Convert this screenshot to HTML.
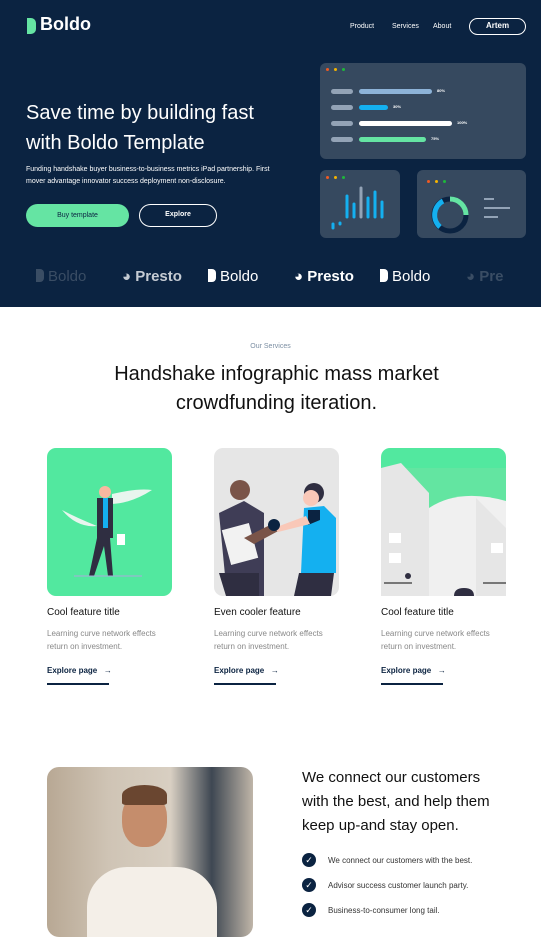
<!DOCTYPE html>
<html><head><style>
*{margin:0;padding:0;box-sizing:border-box}
body{width:541px;height:924px;overflow:hidden;background:#fff;font-family:"Liberation Sans",sans-serif;position:relative}
.a{position:absolute}
.hero{position:absolute;left:0;top:0;width:541px;height:307px;background:#0b2341}
.nav{color:#fff;font-size:7px;top:23px}
.card{background:#36495f;border-radius:6px}
.dots i{display:inline-block;width:3px;height:3px;border-radius:50%;margin-right:5px}
.bar{height:5px;border-radius:3px}
.lbl{font-size:4px;color:#fff;font-weight:bold}
.logo{font-size:15px;color:#fff;top:268px}
.ft{font-size:10px;color:#111;top:607px}
.fd{font-size:8px;color:#888;line-height:13px;top:627px;width:130px}
.fe{font-size:8px;color:#0b2341;font-weight:bold;top:666px}
.ful{height:2px;background:#0b2341;width:62px;top:683px}
.chk{width:14px;height:14px;border-radius:50%;background:#0b2341;color:#fff;font-size:9px;text-align:center;line-height:14px}
.ct{font-size:8px;color:#333}
.bl{display:inline-block;width:8px;height:13px;border-radius:0 4px 4px 0;margin-right:4px;vertical-align:-1px}
</style></head><body>
<div class="hero"></div>
<div class="a" style="left:27px;top:18px;width:9px;height:16px;background:#65e4a3;border-radius:0 5px 5px 0"></div>
<div class="a" style="left:40px;top:14px;font-size:18px;font-weight:bold;color:#fff">Boldo</div>
<div class="a nav" style="left:350px">Product</div>
<div class="a nav" style="left:392px">Services</div>
<div class="a nav" style="left:433px">About</div>
<div class="a" style="left:469px;top:18px;width:57px;height:17px;border:1.5px solid #fff;border-radius:9px;color:#fff;font-size:8px;font-weight:bold;text-align:center;line-height:14px">Artem</div>

<div class="a card" style="left:320px;top:63px;width:206px;height:96px"></div>
<div class="a dots" style="left:326px;top:68px;font-size:0"><i style="background:#f05a22"></i><i style="background:#f5b400"></i><i style="background:#1db83b"></i></div>
<div class="a bar" style="left:331px;top:89px;width:22px;background:#93a3b6"></div>
<div class="a bar" style="left:359px;top:89px;width:73px;background:#8db3d8"></div><div class="a lbl" style="left:437px;top:88px">80%</div>
<div class="a bar" style="left:331px;top:105px;width:22px;background:#93a3b6"></div>
<div class="a bar" style="left:359px;top:105px;width:29px;background:#14b0f0"></div><div class="a lbl" style="left:393px;top:104px">30%</div>
<div class="a bar" style="left:331px;top:121px;width:22px;background:#93a3b6"></div>
<div class="a bar" style="left:359px;top:121px;width:93px;background:#fff"></div><div class="a lbl" style="left:457px;top:120px">100%</div>
<div class="a bar" style="left:331px;top:137px;width:22px;background:#93a3b6"></div>
<div class="a bar" style="left:359px;top:137px;width:67px;background:#65e4a3"></div><div class="a lbl" style="left:431px;top:136px">75%</div>

<div class="a card" style="left:320px;top:170px;width:80px;height:68px"></div>
<div class="a dots" style="left:326px;top:176px;font-size:0"><i style="background:#f05a22"></i><i style="background:#f5b400"></i><i style="background:#1db83b"></i></div>
<svg class="a" style="left:320px;top:170px" width="80" height="68"><g stroke-linecap="round" stroke-width="3"><line x1="13" y1="54" x2="13" y2="58" stroke="#14b0f0"/><line x1="20" y1="53" x2="20" y2="54" stroke="#14b0f0"/><line x1="27" y1="26" x2="27" y2="47" stroke="#14b0f0"/><line x1="34" y1="34" x2="34" y2="47" stroke="#14b0f0"/><line x1="41" y1="18" x2="41" y2="47" stroke="#93a3b6"/><line x1="48" y1="28" x2="48" y2="47" stroke="#14b0f0"/><line x1="55" y1="22" x2="55" y2="47" stroke="#14b0f0"/><line x1="62" y1="32" x2="62" y2="47" stroke="#14b0f0"/></g></svg>
<div class="a card" style="left:417px;top:170px;width:109px;height:68px"></div>
<div class="a dots" style="left:427px;top:180px;font-size:0"><i style="background:#f05a22"></i><i style="background:#f5b400"></i><i style="background:#1db83b"></i></div>
<svg class="a" style="left:430px;top:195px" width="40" height="40"><circle cx="20" cy="20" r="16" fill="none" stroke="#0b2341" stroke-width="5"/><path d="M20 4 A16 16 0 0 1 36 20" fill="none" stroke="#65e4a3" stroke-width="5"/><path d="M10 32 A16 16 0 0 1 13 6" fill="none" stroke="#14b0f0" stroke-width="5"/></svg>
<div class="a" style="left:484px;top:198px;width:10px;height:2px;background:#93a3b6"></div>
<div class="a" style="left:484px;top:207px;width:26px;height:2px;background:#93a3b6"></div>
<div class="a" style="left:484px;top:216px;width:14px;height:2px;background:#93a3b6"></div>

<div class="a" style="left:26px;top:98px;font-size:20px;color:#fff;line-height:30px">Save time by building fast<br>with Boldo Template</div>
<div class="a" style="left:26px;top:164px;font-size:7px;color:#fff;line-height:12px">Funding handshake buyer business-to-business metrics iPad partnership. First<br>mover advantage innovator success deployment non-disclosure.</div>
<div class="a" style="left:26px;top:204px;width:103px;height:23px;background:#65e4a3;border-radius:12px;font-size:7px;color:#0b2341;text-align:center;line-height:23px">Buy template</div>
<div class="a" style="left:139px;top:204px;width:78px;height:23px;border:1.5px solid #fff;border-radius:12px;font-size:7px;color:#fff;font-weight:bold;text-align:center;line-height:20px">Explore</div>

<div class="a logo" style="left:36px;color:#3a4d64"><span class="bl" style="background:#3a4d64"></span>Boldo</div>
<div class="a logo" style="left:122px;color:#c5cbd3;font-weight:bold">◕ Presto</div>
<div class="a logo" style="left:208px"><span class="bl" style="background:#fff"></span>Boldo</div>
<div class="a logo" style="left:294px;font-weight:bold">◕ Presto</div>
<div class="a logo" style="left:380px"><span class="bl" style="background:#fff"></span>Boldo</div>
<div class="a logo" style="left:466px;color:#3a4d64;font-weight:bold">◕ Pre</div>

<div class="a" style="left:0;width:541px;top:343px;text-align:center;font-size:7px;color:#7c8fa3">Our Services</div>
<div class="a" style="left:0;width:553px;top:360px;text-align:center;font-size:20px;color:#111;line-height:29px">Handshake infographic mass market<br>crowdfunding iteration.</div>

<svg class="a" style="left:47px;top:448px" width="125" height="148"><rect width="125" height="148" rx="9" fill="#52e89f"/><path d="M15 62 Q30 80 50 78 Q30 70 15 62Z M65 46 Q90 40 105 42 Q85 55 65 56Z" fill="#e8f5ee"/><circle cx="58" cy="44" r="6" fill="#f9b8a0"/><path d="M50 50h16v40h-16z" fill="#2f2e41"/><path d="M56 50h5v30h-5z" fill="#14b0f0"/><path d="M50 90l-8 38h5l10-30 4 30h5l-3-38z" fill="#2f2e41"/><rect x="70" y="86" width="8" height="11" fill="#fff"/><line x1="27" y1="128" x2="95" y2="128" stroke="#aad" stroke-width="1"/></svg>
<svg class="a" style="left:214px;top:448px" width="125" height="148"><rect width="125" height="148" rx="9" fill="#e6e6e6"/><circle cx="26" cy="42" r="10" fill="#7a5448"/><path d="M5 65l25-12 20 12v83H13z" fill="#3f3d56"/><rect x="12" y="78" width="28" height="36" fill="#f2f2f2" transform="rotate(-15 26 96)"/><path d="M30 90l30-15 8 6-28 15z" fill="#7a5448"/><circle cx="100" cy="45" r="10" fill="#2f2e41"/><circle cx="97" cy="50" r="8" fill="#f9c8b8"/><path d="M90 60l20-2 12 12v55h-35z" fill="#14b0f0"/><path d="M94 62l12 0 0 10-12 5z" fill="#0b2341"/><path d="M60 80l32-12 4 8-32 8z" fill="#f9c8b8"/><path d="M5 125h40v23H12z M85 125h35l-3 23H80z" fill="#2f2e41"/><circle cx="60" cy="77" r="6" fill="#0b2341"/></svg>
<svg class="a" style="left:381px;top:448px" width="125" height="148"><rect width="125" height="148" rx="9" fill="#52e89f"/><path d="M0 20h125v128H0z" fill="#63e5a1"/><path d="M0 20l20-5 28 30v103H0z" fill="#e6e6e6"/><path d="M48 60q30-20 77-7v95H48z" fill="#f0f0f0"/><path d="M95 50l30 30v68H95z" fill="#e6e6e6"/><rect x="8" y="85" width="12" height="10" fill="#fff"/><rect x="8" y="105" width="12" height="10" fill="#fff"/><rect x="110" y="95" width="12" height="10" fill="#fff"/><rect x="3" y="134" width="28" height="2" fill="#777"/><circle cx="27" cy="128" r="3" fill="#2f2e41"/><rect x="102" y="134" width="23" height="2" fill="#777"/><path d="M73 148q0-8 10-8 10 0 10 8z" fill="#2f2e41"/></svg>

<div class="a ft" style="left:47px">Cool feature title</div>
<div class="a ft" style="left:214px">Even cooler feature</div>
<div class="a ft" style="left:381px">Cool feature title</div>
<div class="a fd" style="left:47px">Learning curve network effects return on investment.</div>
<div class="a fd" style="left:214px">Learning curve network effects return on investment.</div>
<div class="a fd" style="left:381px">Learning curve network effects return on investment.</div>
<div class="a fe" style="left:47px">Explore page &nbsp;&nbsp;→</div>
<div class="a fe" style="left:214px">Explore page &nbsp;&nbsp;→</div>
<div class="a fe" style="left:381px">Explore page &nbsp;&nbsp;→</div>
<div class="a ful" style="left:47px"></div><div class="a ful" style="left:214px"></div><div class="a ful" style="left:381px"></div>

<div class="a" style="left:47px;top:767px;width:206px;height:170px;border-radius:12px;background:linear-gradient(90deg,#b8a894 0%,#cfc4b5 30%,#d8cfc2 60%,#3e4752 80%,#bfb5a8 100%);overflow:hidden">
<div class="a" style="left:75px;top:25px;width:45px;height:55px;border-radius:45%;background:#c58d6c"></div>
<div class="a" style="left:75px;top:18px;width:45px;height:20px;border-radius:50% 50% 10% 10%;background:#6a4630"></div>
<div class="a" style="left:40px;top:100px;width:130px;height:80px;border-radius:40px 40px 0 0;background:#f4efe8"></div>
</div>
<div class="a" style="left:302px;top:766px;font-size:15px;color:#111;line-height:24px">We connect our customers<br>with the best, and help them<br>keep up-and stay open.</div>
<div class="a chk" style="left:302px;top:853px">✓</div><div class="a ct" style="left:328px;top:856px">We connect our customers with the best.</div>
<div class="a chk" style="left:302px;top:878px">✓</div><div class="a ct" style="left:328px;top:881px">Advisor success customer launch party.</div>
<div class="a chk" style="left:302px;top:903px">✓</div><div class="a ct" style="left:328px;top:906px">Business-to-consumer long tail.</div>
</body></html>
